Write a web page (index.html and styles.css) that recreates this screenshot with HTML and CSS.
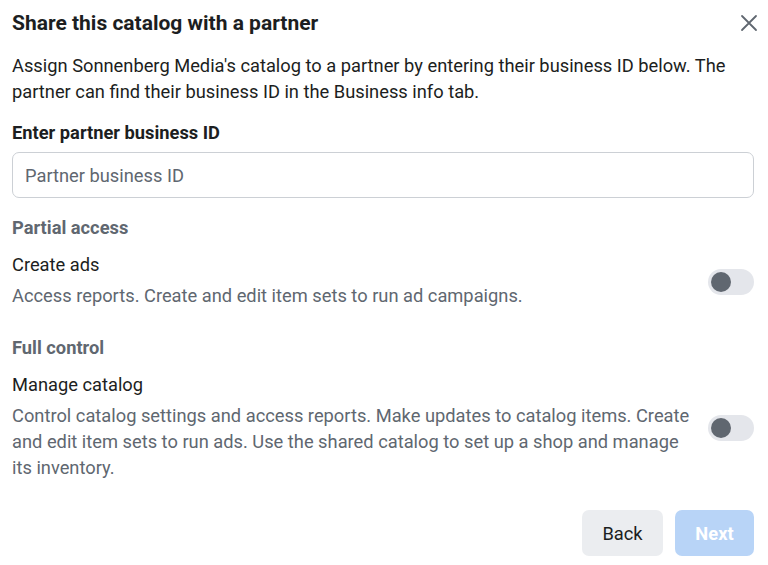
FILE: index.html
```html
<!DOCTYPE html>
<html>
<head>
<meta charset="utf-8">
<link rel="stylesheet" href="styles.css">
</head>
<body>
<div class="dialog">
  <div class="header">
    <h1 class="title">Share this catalog with a partner</h1>
    <button class="close" aria-label="Close">
      <svg width="18" height="18" viewBox="0 0 18 18"><path d="M2 2 L16 16 M16 2 L2 16" stroke="#606770" stroke-width="1.8" stroke-linecap="round" fill="none"/></svg>
    </button>
  </div>
  <p class="intro">Assign Sonnenberg Media's catalog to a partner by entering their business ID below. The partner can find their business ID in the Business info tab.</p>
  <div class="label">Enter partner business ID</div>
  <input class="field" type="text" placeholder="Partner business ID">
  <div class="section">Partial access</div>
  <div class="option">
    <div class="option-text">
      <div class="option-name">Create ads</div>
      <div class="option-desc">Access reports. Create and edit item sets to run ad campaigns.</div>
    </div>
    <div class="toggle"><span class="knob"></span></div>
  </div>
  <div class="section second">Full control</div>
  <div class="option">
    <div class="option-text">
      <div class="option-name">Manage catalog</div>
      <div class="option-desc">Control catalog settings and access reports. Make updates to catalog items. Create and edit item sets to run ads. Use the shared catalog to set up a shop and manage its inventory.</div>
    </div>
    <div class="toggle"><span class="knob"></span></div>
  </div>
  <div class="footer">
    <button class="btn back">Back</button>
    <button class="btn next">Next</button>
  </div>
</div>
</body>
</html>
```
FILE: styles.css
```css
* { box-sizing: border-box; }
html, body { margin: 0; padding: 0; background: #fff; }
body {
  font-family: Roboto, "Liberation Sans", Arial, sans-serif;
  color: #1c1e21;
  width: 768px;
  height: 565px;
  overflow: hidden;
}
.dialog {
  padding: 8px 14px 0 12px;
  display: flex;
  flex-direction: column;
}
.header {
  display: flex;
  justify-content: space-between;
  align-items: center;
  height: 30px;
}
.title {
  margin: 0;
  font-size: 21px;
  line-height: 30px;
  font-weight: 700;
  color: #1c1e21;
}
.close {
  border: 0;
  background: none;
  padding: 0;
  width: 18px;
  height: 18px;
  margin-right: -4px;
}
.intro {
  margin: 15px 0 0;
  font-size: 18.3px;
  line-height: 26px;
  color: #1c1e21;
}
.label {
  margin-top: 17px;
  font-size: 18.3px;
  font-weight: 700;
  line-height: 22px;
  color: #1c1e21;
}
.field {
  margin-top: 8px;
  width: 742px;
  height: 46px;
  border: 1px solid #ccd0d5;
  border-radius: 7px;
  padding: 0 12px;
  font-family: inherit;
  font-size: 18.3px;
  color: #1c1e21;
  outline: none;
}
.field::placeholder { color: #606770; }
.section {
  margin-top: 19px;
  font-size: 18.3px;
  font-weight: 700;
  line-height: 22px;
  color: #606770;
}
.section.second { margin-top: 28px; }
.option {
  display: flex;
  align-items: center;
  justify-content: space-between;
  margin-top: 15px;
  width: 742px;
}
.option-text { max-width: 684px; }
.option-name {
  font-size: 18.3px;
  line-height: 22px;
  color: #1c1e21;
}
.option-desc {
  margin-top: 7px;
  font-size: 18.3px;
  line-height: 26px;
  color: #606770;
}
.toggle {
  width: 46px;
  height: 26px;
  border-radius: 13px;
  background: #e4e6eb;
  padding: 3px;
  flex-shrink: 0;
  display: flex;
  align-items: center;
}
.knob {
  width: 20px;
  height: 20px;
  border-radius: 50%;
  background: #606770;
}
.footer {
  display: flex;
  justify-content: flex-end;
  gap: 12px;
  margin-top: 29px;
  width: 742px;
}
.btn {
  height: 46px;
  border: 0;
  border-radius: 7px;
  font-family: inherit;
  font-size: 18.3px;
  padding: 0;
}
.back { background: #ebedf0; color: #1c1e21; width: 81px; }
.next { background: #b8d4f7; color: #fff; font-weight: 700; width: 79px; }
```
